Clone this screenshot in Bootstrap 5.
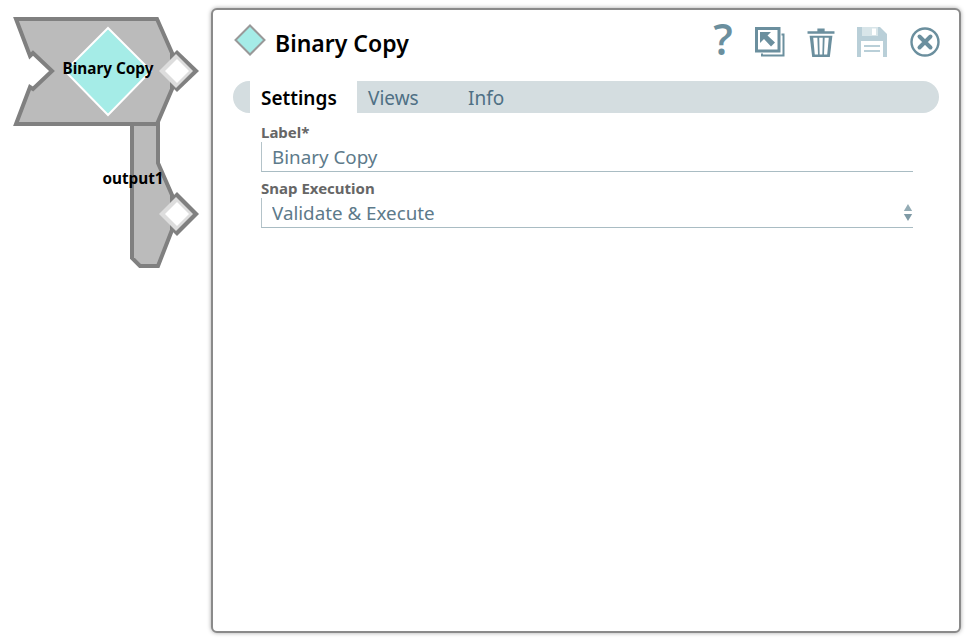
<!DOCTYPE html>
<html lang="en">
<head>
<meta charset="utf-8">
<title>Binary Copy</title>
<link rel="stylesheet" href="https://cdn.jsdelivr.net/npm/bootstrap@5.3.0/dist/css/bootstrap.min.css">
<style>
html,body{height:100%;background:#fff;overflow:hidden}
body{font-family:"Noto Sans","Open Sans",sans-serif}
.stage{height:644px}
.canvas-col{width:211px;flex:none}
.canvas-col text{font-family:"Noto Sans",sans-serif;font-weight:700;font-size:15.3px;fill:#000}
.panel{width:750px;height:625px;margin-top:8px;background:#fff;border:2px solid #8a8a8a;border-radius:6px;box-shadow:0 0 4px rgba(0,0,0,.35)}
.head-row{height:64px;margin-bottom:7px;padding:0 19px 0 21px}
.head-mark{margin-bottom:4px}
.head-title{font-size:23px;font-weight:600;color:#000;margin:2px 0 0 9px;line-height:1}
.head-q{font-size:43px;font-weight:600;color:#6b8f9e;line-height:1;font-family:"Open Sans",sans-serif;width:20px;text-align:center;margin-top:-8px}
.tools{gap:22px}
.tool-x{margin-left:1px}
.tabbar{height:32px;margin:0 20px;background:#d4dde0;border-radius:16px;padding-left:17px}
.tabbar .nav-link{padding:0;font-size:19px;color:#4f7085;line-height:34px;height:32px}
.tabbar .nav-link.active{background:#fff;color:#000;font-weight:600;width:107px;padding-left:11px}
.tab-views{width:100px;margin-left:11px}
.fields{padding:9px 46px 0 48px}
.fld-label{font-size:15px;font-weight:700;color:#666;margin:0;line-height:20px;display:block}
.fld-input,.fld-input:focus{display:block;width:100%;height:30px;padding:0 0 0 10px;border:0;border-left:1px solid #b4c3c9;border-bottom:1px solid #a9bcc3;border-radius:0;font-size:18.8px;color:#5d7a8a;background:transparent;box-shadow:none;outline:0;appearance:none;line-height:28px}
.fld-gap{margin-top:6px}
.updown{position:absolute;right:0;top:6px;width:10px;height:18px}
</style>
</head>
<body>
<div class="stage d-flex">
  <div class="canvas-col">
    <svg width="211" height="290" viewBox="0 0 211 290">
      <path d="M132 122V258L140 266H158L172 230V195L158 163V122Z" fill="#bbb" stroke="#808080" stroke-width="4"/>
      <polygon points="171,198 177,192 199,214 177,236 171,230" fill="#808080"/>
      <polygon points="159,214 176,197 193,214 176,231" fill="#ddd"/>
      <polygon points="165,214 177,202 189,214 177,226" fill="#fff"/>
      <path d="M16 19H157L172 53V89L157 124H16L30 87L33 89L52 71L33 53L30 56Z" fill="#bbb" stroke="#808080" stroke-width="4" stroke-linejoin="miter"/>
      <polygon points="171,56 177,50 199,71 177,92 171,86" fill="#808080"/>
      <polygon points="159,71 176,54 193,71 176,88" fill="#ddd"/>
      <polygon points="165,71 177,59 189,71 177,83" fill="#fff"/>
      <polygon points="108,28 151,71 108,115 65,71" fill="#a5ece7" stroke="#fff" stroke-width="2"/>
      <text x="108" y="74" text-anchor="middle">Binary Copy</text>
      <text x="133" y="184" text-anchor="middle">output1</text>
    </svg>
  </div>
  <div class="panel">
    <div class="head-row d-flex align-items-center">
      <svg class="head-mark" width="32" height="32" viewBox="0 0 32 32" aria-hidden="true"><polygon points="16,1.5 30.5,16 16,30.5 1.5,16" fill="#a5ece7" stroke="#999" stroke-width="2"/></svg>
      <h1 class="head-title flex-grow-1">Binary Copy</h1>
      <div class="tools d-flex align-items-center">
        <span class="head-q">?</span>
        <svg width="30" height="30" viewBox="0 0 30 30" aria-hidden="true"><path d="M1.5 1.5H24V24H1.5Z" fill="none" stroke="#6b8f9e" stroke-width="3"/><path d="M26.5 7.5H28.5V28.5H7V26.5" fill="none" stroke="#6b8f9e" stroke-width="2"/><path d="M5 5H16L12.5 8.5L20 15.5L16 19.5L9 12L5 16Z" fill="#6b8f9e"/></svg>
        <svg width="28" height="30" viewBox="0 0 27 29" preserveAspectRatio="none" aria-hidden="true"><path d="M0.5 4H26.5V6.5H0.5Z M10 1.5H17V4H10Z" fill="#6b8f9e"/><path d="M2.5 8.5H24.5L22 29H5Z" fill="#6b8f9e"/><path d="M6 10.5H10L10.6 26.5H7.5Z M11.8 10.5H15.2L14.8 26.5H12.2Z M17 10.5H21L19.5 26.5H16.4Z" fill="#fff"/></svg>
        <svg width="30" height="30" viewBox="0 0 30 30" aria-hidden="true"><path d="M0 0H23L30 7V30H0Z" fill="#b9cfd8"/><path d="M5 0H21V9H5Z" fill="#fff" opacity=".45"/><path d="M15 1.5H19V8H15Z" fill="#fff"/><path d="M4 14H26V30H4Z" fill="#fff"/><path d="M7 18H23V20H7Z M7 23H23V25H7Z" fill="#b9cfd8"/></svg>
        <svg class="tool-x" width="30" height="30" viewBox="0 0 30 30" aria-hidden="true"><circle cx="15" cy="15" r="13.5" fill="none" stroke="#6b8f9e" stroke-width="2.4"/><path d="M9.5 9.5L20.5 20.5M20.5 9.5L9.5 20.5" stroke="#6b8f9e" stroke-width="4" stroke-linecap="round"/></svg>
      </div>
    </div>
    <ul class="nav tabbar">
      <li class="nav-item"><a class="nav-link active" href="#">Settings</a></li>
      <li class="nav-item tab-views"><a class="nav-link" href="#">Views</a></li>
      <li class="nav-item"><a class="nav-link" href="#">Info</a></li>
    </ul>
    <form class="fields">
      <label class="fld-label" for="f1">Label*</label>
      <input id="f1" class="fld-input" type="text" value="Binary Copy">
      <label class="fld-label fld-gap" for="f2">Snap Execution</label>
      <div class="position-relative">
        <select id="f2" class="fld-input"><option>Validate &amp; Execute</option></select>
        <svg class="updown" viewBox="0 0 12 18" preserveAspectRatio="none" aria-hidden="true"><polygon points="6,0 11,7 1,7" fill="#94acb5"/><polygon points="1,10 11,10 6,17" fill="#7f9aa5"/></svg>
      </div>
    </form>
  </div>
</div>
<script src="https://cdn.jsdelivr.net/npm/bootstrap@5.3.0/dist/js/bootstrap.bundle.min.js"></script>
</body>
</html>
